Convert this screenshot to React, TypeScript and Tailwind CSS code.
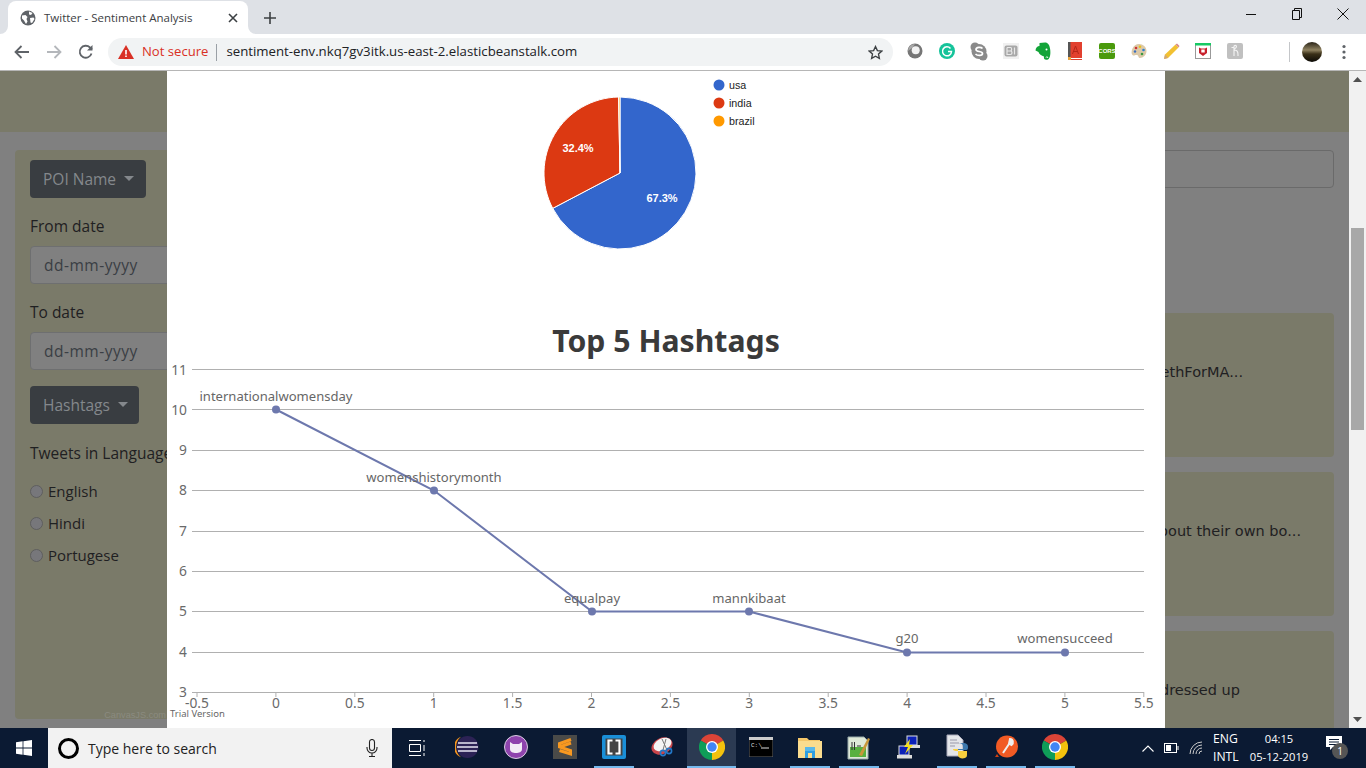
import React from "react";

const sans = "font-['Open_Sans',sans-serif]";

function sector(cx: number, cy: number, r: number, a0: number, a1: number) {
  const p = (a: number) => [cx + r * Math.sin((a * Math.PI) / 180), cy - r * Math.cos((a * Math.PI) / 180)];
  const [x0, y0] = p(a0);
  const [x1, y1] = p(a1);
  return `M${cx} ${cy}L${x0.toFixed(2)} ${y0.toFixed(2)}A${r} ${r} 0 ${a1 - a0 > 180 ? 1 : 0} 1 ${x1.toFixed(2)} ${y1.toFixed(2)}Z`;
}

function ChromeIcon({ size = 26 }: { size?: number }) {
  return (
    <svg width={size} height={size} viewBox="0 0 26 26">
      <path d={sector(13, 13, 13, -60, 60)} fill="#db4437" />
      <path d={sector(13, 13, 13, 60, 180)} fill="#f4c20d" />
      <path d={sector(13, 13, 13, 180, 300)} fill="#0f9d58" />
      <circle cx="13" cy="13" r="6" fill="#fff" />
      <circle cx="13" cy="13" r="4.7" fill="#4285f4" />
    </svg>
  );
}

function TabStrip() {
  return (
    <div className="flex h-[34px] items-end bg-[#dee1e6] pl-[8px]">
      <div className="relative flex h-[33px] w-[240px] items-center rounded-t-lg bg-white pl-[12px] pr-[10px]">
        <svg className="absolute bottom-0 left-[-8px]" width="8" height="8" viewBox="0 0 8 8"><path d="M0 8A8 8 0 0 0 8 0V8Z" fill="#fff" /></svg>
        <svg className="absolute bottom-0 right-[-8px]" width="8" height="8" viewBox="0 0 8 8"><path d="M8 8A8 8 0 0 1 0 0V8Z" fill="#fff" /></svg>
        <svg width="16" height="16" viewBox="0 0 16 16">
          <circle cx="8" cy="8" r="7.5" fill="#5f6368" />
          <path d="M2 5.5L5.5 5 7.5 7 6.5 9 7.5 11.5 6 14 4 10.5 2 8.5ZM9 1.5L12.5 3 11 5 9 4.5ZM10 8L13.5 7.5 14.5 9 12 13 10.5 12.5Z" fill="#fff" />
        </svg>
        <span className={`ml-[8px] text-[11.5px] text-[#3c4043] ${sans}`}>Twitter - Sentiment Analysis</span>
        <svg className="ml-auto" width="10" height="10" viewBox="0 0 10 10" stroke="#3c4043" strokeWidth="1.6"><path d="M1 1L9 9M9 1L1 9" /></svg>
      </div>
      <div className="flex h-[33px] w-[44px] items-center justify-center">
        <svg width="12" height="12" viewBox="0 0 12 12" stroke="#3c4043" strokeWidth="1.6"><path d="M6 0V12M0 6H12" /></svg>
      </div>
      <div className="ml-auto flex h-[34px]">
        {[0, 1, 2].map((i) => (
          <div key={i} className="flex h-[28px] w-[46px] items-center justify-center">
            {i === 0 && <svg width="10" height="10" viewBox="0 0 10 10" stroke="#111" strokeWidth="1"><path d="M0 5.5H10" /></svg>}
            {i === 1 && <svg width="10" height="12" viewBox="0 0 10 12" fill="none" stroke="#111" strokeWidth="1"><path d="M.5 2.5H7.5V11.5H.5ZM2.5 2.5V.5H9.5V9.5H7.5" /></svg>}
            {i === 2 && <svg width="12" height="12" viewBox="0 0 12 12" stroke="#111" strokeWidth="1"><path d="M.5.5L11.5 11.5M11.5.5L.5 11.5" /></svg>}
          </div>
        ))}
      </div>
    </div>
  );
}

const exts: React.ReactNode[] = [
  <svg key="0" width="16" height="16" viewBox="0 0 16 16"><circle cx="8" cy="8" r="7.5" fill="#767676" /><path d="M1 8A7 7 0 0 1 8 1L5 5Z" fill="#a8a8a8" /><circle cx="8.7" cy="7.3" r="4" fill="#f2f2f2" /></svg>,
  <svg key="1" width="16" height="16" viewBox="0 0 16 16"><circle cx="8" cy="8" r="8" fill="#15c39a" /><path d="M11.5 5.5A4.5 4.5 0 1 0 12.5 8.5H9" fill="none" stroke="#fff" strokeWidth="1.5" /></svg>,
  <svg key="2" width="18" height="19" viewBox="0 0 18 19"><circle cx="5" cy="5" r="4.5" fill="#8a8a8a" /><circle cx="13" cy="14" r="4.5" fill="#8a8a8a" /><circle cx="9" cy="9.5" r="7.5" fill="#8a8a8a" /><path d="M12.5 6.5C11 4.8 6 5 6 7.5 6 10.5 12.5 8.5 12.5 11.5 12.5 14 7.5 14 5.5 12" fill="none" stroke="#fff" strokeWidth="1.7" /></svg>,
  <svg key="3" width="16" height="16" viewBox="0 0 16 16"><rect width="16" height="16" fill="#f0f0f0" /><rect x="1.5" y="2.5" width="13" height="11" rx="2" fill="#a8a8a8" /><path d="M4 4.5V11.5H7.5C9.5 11.5 9.5 8 7.5 8H4M7.5 8C9 8 9 4.5 7.5 4.5H4M11.5 4.5V11.5" fill="none" stroke="#e8e8e8" strokeWidth="1.2" /></svg>,
  <svg key="4" width="17" height="19" viewBox="0 0 17 19"><path d="M4.5 1L10 .5C13 .5 14.5 3 15 6.5 16 11.5 15 16.5 13 17.5 10 18.5 8.5 17 9 14.5 6.5 14 4 12 3.5 10L.5 8.5C.5 6 2.5 4 4.5 4Z" fill="#12a438" /><circle cx="11.5" cy="7.5" r="1" fill="#fff" /><path d="M11 15.5C12 14 13 15 12.5 16" fill="none" stroke="#fff" /></svg>,
  <svg key="5" width="14" height="18" viewBox="0 0 14 18"><rect width="14" height="15" fill="#e2402f" /><rect width="2.5" height="15" fill="#555" /><path d="M4.5 12L7.5 4 10.5 12M5.5 9.5H9.5" fill="none" stroke="#b5261a" strokeWidth="1" /><rect y="15" width="14" height="1" fill="#e2402f" /><rect y="17" width="14" height="1" fill="#e2402f" /><rect y="15" width="3" height="3" fill="#e8a33a" /></svg>,
  <div key="6" className="flex h-[16px] w-[16px] items-center justify-center overflow-hidden rounded-[2px] bg-[#4a9a0c] font-['Liberation_Sans',sans-serif] text-[6px] font-bold leading-none text-white">CORS</div>,
  <svg key="7" width="16" height="16" viewBox="0 0 16 16"><path d="M8 1C12 1 15.5 4 15.5 8 15.5 12 12 15 9 15 7 15 8 12.5 6 12 4 11.5 3 13.5 1.5 12 0 10.5 .5 8 1.5 5.5 3 2.5 5 1 8 1Z" fill="#dcc9a8" /><circle cx="5" cy="5" r="1.3" fill="#c33" /><circle cx="9" cy="3.8" r="1.3" fill="#e8c020" /><circle cx="12.5" cy="7" r="1.3" fill="#2d7fd0" /><circle cx="11" cy="11" r="1.3" fill="#3a9a40" /><circle cx="4" cy="8.5" r="1.2" fill="#3a6fc0" /></svg>,
  <svg key="8" width="17" height="17" viewBox="0 0 17 17"><path d="M1 16L2 11.5 12.5 1.5 15.5 4.5 5 15Z" fill="#f2c132" /><path d="M12.5 1.5L14 0.5 16.5 3 15.5 4.5Z" fill="#d88a8a" /><path d="M1 16L2 11.5 5 15Z" fill="#cfa67a" /></svg>,
  <svg key="9" width="16" height="16" viewBox="0 0 16 16"><rect x=".5" y=".5" width="15" height="15" fill="#fff" stroke="#999" /><rect width="16" height="2.5" fill="#17c964" /><path d="M4 4.5L6 5.5H10L12 4.5V10L8 13 4 10Z" fill="#c8202c" /><rect x="6.3" y="6.5" width="3.4" height="3" fill="#fff" /></svg>,
  <svg key="10" width="16" height="16" viewBox="0 0 16 16"><rect width="16" height="16" rx="2" fill="#c0c0c0" /><path d="M7 13V3.5C7 2 9.5 2 9.5 3.5 9.5 5.5 6 6 7 7.5 10 6.5 11 9 11 11.5V13M4.5 4.5H6.5" fill="none" stroke="#f4f4f4" strokeWidth="1.1" /></svg>,
];

function Toolbar() {
  return (
    <div className="flex h-[37px] items-center border-b border-[#b6b6b6] bg-white">
      <div className="flex w-[108px] items-center pl-[14px]">
        <svg className="mr-[16px]" width="16" height="14" viewBox="0 0 16 14" fill="none" stroke="#5f6368" strokeWidth="1.8"><path d="M15 7H2M7.5 1L1.5 7 7.5 13" /></svg>
        <svg className="mr-[16px]" width="16" height="14" viewBox="0 0 16 14" fill="none" stroke="#b4b7bb" strokeWidth="1.8"><path d="M1 7H14M8.5 1L14.5 7 8.5 13" /></svg>
        <svg width="16" height="16" viewBox="0 0 16 16" fill="none" stroke="#5f6368" strokeWidth="1.8"><path d="M13.5 9.5A6 6 0 1 1 12 3.5L14 5.5" /><path d="M14.5 1V6.5H9" fill="#5f6368" stroke="none" /></svg>
      </div>
      <div className={`flex h-[28px] w-[785px] items-center rounded-full bg-[#f1f3f4] pl-[10px] text-[13px] ${sans}`}>
        <svg width="16" height="14" viewBox="0 0 16 14"><path d="M8 0L16 14H0Z" fill="#d93025" /><path d="M7.2 5H8.8V9.5H7.2ZM7.2 10.5H8.8V12H7.2Z" fill="#fff" /></svg>
        <span className="ml-[8px] text-[13.1px] text-[#d93025]">Not secure</span>
        <span className="ml-[8px] h-[17px] w-px bg-[#9aa0a6]" />
        <span className="ml-[9px] text-[13.23px] text-[#202124]">sentiment-env.nkq7gv3itk.us-east-2.elasticbeanstalk.com</span>
        <svg className="ml-auto mr-[10px]" width="15" height="15" viewBox="0 0 24 24" fill="none" stroke="#3c4043" strokeWidth="2.2"><path d="M12 2.5L15 9 22 9.8 16.8 14.5 18.2 21.5 12 18 5.8 21.5 7.2 14.5 2 9.8 9 9Z" /></svg>
      </div>
      <div className="mb-[2px] ml-[6px] flex">
        {exts.map((e, i) => (
          <div key={i} className="flex h-[32px] w-[32px] items-center justify-center">{e}</div>
        ))}
      </div>
      <span className="ml-[38px] h-[20px] w-px bg-[#c4c6c9]" />
      <svg className="ml-[12px]" width="20" height="20" viewBox="0 0 20 20">
        <defs>
          <linearGradient id="av" x1="0" y1="0" x2="0" y2="1"><stop offset="0" stopColor="#2a2418" /><stop offset=".4" stopColor="#8f8260" /><stop offset=".6" stopColor="#3a3018" /><stop offset="1" stopColor="#0c0a06" /></linearGradient>
        </defs>
        <circle cx="10" cy="10" r="10" fill="url(#av)" />
      </svg>
      <svg className="ml-[20px]" width="4" height="16" viewBox="0 0 4 16" fill="#5f6368"><circle cx="2" cy="2.5" r="1.6" /><circle cx="2" cy="8" r="1.6" /><circle cx="2" cy="13.5" r="1.6" /></svg>
    </div>
  );
}

function Radio({ label }: { label: string }) {
  return (
    <div className="flex h-[32px] items-center">
      <span className="mt-[1px] h-[13px] w-[13px] rounded-full border border-[#5e5e5e] bg-[#77777b]" />
      <span className="ml-[5px] text-[15px] text-[#1f2022]">{label}</span>
    </div>
  );
}

function DateInput() {
  return (
    <div className="flex h-[38px] items-center rounded-l border border-[#6e6f70] bg-[#808080] pl-[13px] pt-[2px] tracking-[0.5px] text-[#3a3e44]">dd-mm-yyyy</div>
  );
}

function Dropdown({ label, w }: { label: string; w: string }) {
  return (
    <div className={`flex h-[38px] ${w} items-center rounded bg-[#393d41] pl-[13px] pt-[2px] text-[#84888c]`}>
      {label}
      <span className="mb-[4px] ml-[8px] h-0 w-0 border-x-[5px] border-t-[5px] border-x-transparent border-t-[#84888c]" />
    </div>
  );
}

function Page() {
  const cards = [
    { t: "ethForMA...", pr: "pr-[91px]" },
    { t: "about their own bo...", pr: "pr-[33px]" },
    { t: "dressed up", pr: "pr-[94px]" },
  ];
  return (
    <div className={`flex-1 overflow-hidden bg-[#808080] text-[15.5px] ${sans}`}>
      <div className="h-[61px] bg-[#7a7a69]" />
      <div className="flex gap-[20px] pl-[15px] pr-[15px] pt-[18px]">
        <div className="h-[569px] w-[300px] rounded-l bg-[#7a7a69] px-[15px] pt-[10px] text-[#1f2022]">
          <Dropdown label="POI Name" w="w-[116px]" />
          <div className="mt-[16px] h-[24px] leading-[24px]">From date</div>
          <div className="mt-[8px]"><DateInput /></div>
          <div className="mt-[16px] h-[24px] leading-[24px]">To date</div>
          <div className="mt-[8px]"><DateInput /></div>
          <div className="mt-[16px]"><Dropdown label="Hashtags" w="w-[109px]" /></div>
          <div className="mt-[17px] h-[24px] whitespace-nowrap leading-[24px]">Tweets in Language</div>
          <div className="mt-[10px]">
            <Radio label="English" />
            <Radio label="Hindi" />
            <Radio label="Portugese" />
          </div>
        </div>
        <div className="flex-1">
          <div className="h-[38px] rounded border border-[#6a6a6a]" />
          <div className="mt-[125px] flex flex-col gap-[15px] font-['DejaVu_Sans',sans-serif] text-[14.5px] leading-[22px] text-[#1f2022]">
            {cards.map((c) => (
              <div key={c.t} className={`flex h-[144px] items-start justify-end rounded bg-[#7a7a69] pt-[48px] ${c.pr}`}>{c.t}</div>
            ))}
          </div>
        </div>
      </div>
    </div>
  );
}

function Pie() {
  const legend = [
    ["usa", "#3366cc", 14],
    ["india", "#dc3912", 32],
    ["brazil", "#ff9900", 50],
  ] as const;
  const a = 0.673 * 360;
  const b = a + 0.324 * 360;
  return (
    <svg width="998" height="209" viewBox="167 71 998 209" className="block font-['Liberation_Sans',sans-serif]">
      <g stroke="#fff" strokeWidth="1">
        <path d={sector(620, 173, 76, 0, a)} fill="#3366cc" />
        <path d={sector(620, 173, 76, a, b)} fill="#dc3912" />
        <path d={sector(620, 173, 76, b, 360)} fill="#ff9900" />
      </g>
      <text x="662" y="202" textAnchor="middle" fontSize="11" fontWeight="700" fill="#fff">67.3%</text>
      <text x="578" y="152" textAnchor="middle" fontSize="11" fontWeight="700" fill="#fff">32.4%</text>
      {legend.map(([t, c, y]) => (
        <g key={t}>
          <circle cx="719" cy={71 + y} r="5.5" fill={c} />
          <text x="729" y={71 + y + 4} fontSize="10.7" fill="#222">{t}</text>
        </g>
      ))}
    </svg>
  );
}

function LineChart() {
  const gy = [692, 652, 611, 571, 531, 490, 450, 409.5, 369.5];
  const xs = [276, 434, 592, 749, 907, 1065];
  const pts = [10, 8, 5, 5, 4, 4].map((v, i) => [xs[i], Math.floor(gy[v - 3]) + 0.5] as const);
  const labels = [
    ["internationalwomensday", 276, 401],
    ["womenshistorymonth", 434, 482],
    ["equalpay", 592, 603],
    ["mannkibaat", 749, 603],
    ["g20", 907, 643],
    ["womensucceed", 1065, 643],
  ] as const;
  const ticks = ["-0.5", "0", "0.5", "1", "1.5", "2", "2.5", "3", "3.5", "4", "4.5", "5", "5.5"];
  return (
    <svg width="998" height="448" viewBox="167 280 998 448" className="block font-['Noto_Sans',sans-serif]">
      <text x="666" y="352" textAnchor="middle" fontSize="30.2" fontWeight="700" fill="#3a3a3a">Top 5 Hashtags</text>
      {gy.map((y, i) => (
        <g key={y}>
          <line x1="192" x2="1144" y1={Math.floor(y) + 0.5} y2={Math.floor(y) + 0.5} stroke="#b0b0b0" />
          <text x="187" y={y + 5} textAnchor="end" fontSize="13.8" fill="#6a6a6a">{i + 3}</text>
        </g>
      ))}
      {ticks.map((t, i) => {
        const x = 197 + i * 78.9;
        return (
          <g key={t}>
            <line x1={x} x2={x} y1="692" y2="697" stroke="#b0b0b0" />
            <text x={x} y="708" textAnchor="middle" fontSize="13.8" fill="#6a6a6a">{t}</text>
          </g>
        );
      })}
      <polyline points={pts.map((p) => p.join(",")).join(" ")} fill="none" stroke="#6d78ad" strokeWidth="2" />
      {pts.map(([x, y]) => <circle key={x} cx={x} cy={y} r="4" fill="#6d78ad" />)}
      {labels.map(([t, x, y]) => (
        <text key={t} x={x} y={y} textAnchor="middle" fontSize="13.05" fill="#666">{t}</text>
      ))}
      <text x="170" y="717" fontSize="9.5" fill="#666">Trial Version</text>
    </svg>
  );
}

function Taskbar() {
  const icons: { el: React.ReactNode; line?: boolean; active?: boolean }[] = [
    { el: <svg width="24" height="24" viewBox="0 0 24 24"><circle cx="12.5" cy="12" r="11" fill="#2c2255" /><path d="M6 1.8A11 11 0 0 0 6 22.2 13 13 0 0 1 6 1.8Z" fill="#f7941e" /><path d="M3 8H22M2 12H23M3 16H22" stroke="#e8e6f4" strokeWidth="1.6" /></svg> },
    { el: <svg width="24" height="24" viewBox="0 0 24 24"><circle cx="12" cy="12" r="11.5" fill="#8e44ad" stroke="#d8cfe0" strokeWidth="1" /><path d="M6 7L9 9H15L18 7V14C18 17 15 18 12 18 9 18 6 17 6 14Z" fill="#f2edf6" /></svg> },
    { el: <svg width="24" height="24" viewBox="0 0 24 24"><rect width="24" height="24" fill="#4a4a48" /><path d="M18 4.5L6.5 8.5V12L17.5 15.5V19L6.5 15.5M6.5 12L18 8" fill="none" stroke="#f89820" strokeWidth="3" /></svg> },
    { line: true, el: <svg width="24" height="24" viewBox="0 0 24 24"><rect width="24" height="24" rx="2" fill="#1a8fd8" /><rect x="3.5" y="3.5" width="17" height="17" fill="#444" /><path d="M10.5 5.5H6.5V18.5H10.5M13.5 5.5H17.5V18.5H13.5" fill="none" stroke="#fff" strokeWidth="2.2" /></svg> },
    { el: <svg width="24" height="24" viewBox="0 0 24 24"><ellipse cx="11" cy="11" rx="11" ry="8" transform="rotate(-25 11 11)" fill="#c9454a" /><ellipse cx="11.5" cy="9.5" rx="9.5" ry="6" transform="rotate(-25 11.5 9.5)" fill="#f4f4f4" /><path d="M11 4L16 15M15 4L12 15" stroke="#777" strokeWidth="1" /><circle cx="12" cy="18" r="2.6" fill="none" stroke="#2378c8" strokeWidth="1.6" /><circle cx="18" cy="16" r="2.6" fill="none" stroke="#2378c8" strokeWidth="1.6" /></svg> },
    { active: true, el: <ChromeIcon /> },
    { el: <svg width="24" height="20" viewBox="0 0 24 20"><rect width="24" height="20" rx="1" fill="#000" stroke="#666" /><rect width="24" height="3" fill="#ccc" /><text x="2" y="10" fontSize="6" fill="#ddd" fontFamily="Liberation Mono">C:\</text><path d="M12 11H20" stroke="#ddd" /></svg> },
    { line: true, el: <svg width="24" height="21" viewBox="0 0 24 21"><path d="M0 1H9L11 3H22V8H0Z" fill="#f5c76a" /><rect y="4" width="24" height="17" fill="#fbdc8e" /><path d="M7 12H17V21H14V16H10V21H7Z" fill="#2f9ee0" /><rect x="7" y="10" width="10" height="4" fill="#5ab8ea" /></svg> },
    { line: true, el: <svg width="24" height="26" viewBox="0 0 24 26"><path d="M1 3H17L21 7V25H1Z" fill="#dfe9d8" stroke="#9aa" /><rect x="3" y="13" width="16" height="10" fill="#58b03f" /><path d="M5 8V16M7.5 8V16M10 12H14" stroke="#333" strokeWidth="1" /><path d="M12 21L21 4 23 5 15 22Z" fill="#c9973a" /></svg> },
    { el: <svg width="24" height="24" viewBox="0 0 24 24"><rect x="11" y="1" width="10" height="9" fill="#0b20b8" stroke="#ddd" /><rect x="9" y="10" width="15" height="3" fill="#ddd" /><rect x="3" y="11" width="10" height="9" fill="#0b20b8" stroke="#ddd" /><rect x="1" y="20" width="15" height="3.5" fill="#ddd" /><path d="M14 4L8 12H12L9 19 17 10H13Z" fill="#f5e020" /></svg> },
    { line: true, el: <svg width="24" height="26" viewBox="0 0 24 26"><path d="M2 1H13L18 6V22H2Z" fill="#e4e6ea" stroke="#aab" /><path d="M5 6H12M5 9H14M5 12H10" stroke="#99a" /><path d="M12 9C17 9 18 10 18 13V15H13V16H21C23 16 23 14 23 13 23 10 21 9 18 9ZM16 11V12.5" fill="#3d78ad" /><path d="M8 15H13V21C13 24 17 25 20 24 22 23 22 22 22 20V17H13.5C11 17 8 17 8 15Z" fill="#f9cf3e" /></svg> },
    { line: true, el: <svg width="24" height="24" viewBox="0 0 24 24"><circle cx="13" cy="11.5" r="11" fill="#f15a24" /><path d="M9 18L15 9M16 4C19 4 20 8 17.5 10L15 8.5Z" stroke="#eee" strokeWidth="2" fill="#eee" /><path d="M1 22L3 19 5 22Z" fill="#d04010" /></svg> },
    { line: true, el: <ChromeIcon /> },
  ];
  return (
    <div className={`flex h-[40px] items-center bg-[#0b1a33] text-white ${sans}`}>
      <div className="flex h-[40px] w-[48px] items-center justify-center">
        <svg width="16" height="16" viewBox="0 0 16 16" fill="#fff"><path d="M0 2.3L6.6 1.3V7.6H0ZM7.4 1.2L16 0V7.6H7.4ZM0 8.4H6.6V14.7L0 13.7ZM7.4 8.4H16V16L7.4 14.8Z" /></svg>
      </div>
      <div className="flex h-[40px] w-[344px] items-center bg-[#f2f2f2] pl-[10px] text-[14px] text-[#222]">
        <span className="h-[21px] w-[21px] rounded-full border-[3px] border-black" />
        <span className="ml-[9px]">Type here to search</span>
        <svg className="ml-auto mr-[14px]" width="12" height="18" viewBox="0 0 12 18" fill="none" stroke="#222" strokeWidth="1.1"><rect x="3.5" y=".5" width="5" height="11" rx="2.5" /><path d="M1 8V9A5 5 0 0 0 11 9V8M6 14V17M3 17.5H9" /></svg>
      </div>
      <div className="flex h-[40px] w-[50px] items-center justify-center">
        <svg width="16" height="18" viewBox="0 0 16 18" fill="none" stroke="#fff" strokeWidth="1"><path d="M0 1.5H12M0 16.5H12M.5 5.5H11.5V12.5H.5ZM15 1V3M15 6V12M15 14V17" /></svg>
      </div>
      {icons.map((ic, i) => (
        <div key={i} className={`flex h-[40px] w-[49px] justify-center ${ic.active ? "bg-[#2b3a52]" : ""}`}>
          <div className={`flex h-[40px] items-center justify-center border-b-2 ${ic.active ? "w-[49px] border-[#76b9ed]" : ic.line ? "w-[40px] border-[#76b9ed]" : "w-[40px] border-transparent"}`}>
            {ic.el}
          </div>
        </div>
      ))}
      <div className="ml-[63px] flex items-center">
        <svg width="12" height="7" viewBox="0 0 12 7" fill="none" stroke="#fff" strokeWidth="1.1"><path d="M.5 6.5L6 1 11.5 6.5" /></svg>
        <svg className="ml-[10px]" width="15" height="10" viewBox="0 0 15 10" fill="none" stroke="#fff"><rect x=".5" y=".5" width="12" height="9" /><rect x="2" y="2" width="5" height="6" fill="#fff" stroke="none" /><path d="M14 3V7" /></svg>
        <svg className="ml-[10px]" width="15" height="14" viewBox="0 0 15 14" fill="none" stroke="#ccc"><path d="M1 13A12 12 0 0 1 13 1M4 13A9 9 0 0 1 13 4M7 13A6 6 0 0 1 13 7M10 13A3 3 0 0 1 13 10" /></svg>
      </div>
      <div className="ml-[9px] flex w-[30px] flex-col text-[12.2px] leading-[18px]">
        <span>ENG</span>
        <span>INTL</span>
      </div>
      <div className="ml-[5px] flex w-[62px] flex-col items-center text-[11.2px] leading-[18px]">
        <span>04:15</span>
        <span>05-12-2019</span>
      </div>
      <div className="relative ml-[16px] h-[24px] w-[18px]">
        <svg width="16" height="15" viewBox="0 0 16 15" fill="#fff"><path d="M0 0H16V11H7L4 14V11H0Z" /><path d="M3 3.5H13M3 6H13M3 8.5H10" stroke="#0b1a33" /></svg>
        <span className="absolute left-[6px] top-[7px] flex h-[16px] w-[16px] items-center justify-center rounded-full bg-[#555] text-[10px] leading-none">1</span>
      </div>
    </div>
  );
}

export default function App() {
  return (
    <div className="flex h-[768px] w-[1366px] flex-col overflow-hidden">
      <TabStrip />
      <Toolbar />
      <div className="relative flex h-[657px]">
        <Page />
        <div className="relative flex w-[17px] flex-col items-center bg-[#f1f1f1]">
          <svg className="mt-[6px]" width="9" height="5" viewBox="0 0 9 5" fill="#505050"><path d="M4.5 0L9 5H0Z" /></svg>
          <div className="mt-[146px] h-[202px] w-[13px] bg-[#a8a8a8]" />
          <svg className="mb-[6px] mt-auto" width="9" height="5" viewBox="0 0 9 5" fill="#505050"><path d="M4.5 5L9 0H0Z" /></svg>
        </div>
        <div className="absolute bottom-0 left-[167px] top-0 w-[998px] bg-white">
          <Pie />
          <LineChart />
          <span className="absolute right-[999px] top-[638px] whitespace-nowrap font-['Liberation_Sans',sans-serif] text-[9.2px] text-[#8b8b80]">CanvasJS.com</span>
        </div>
      </div>
      <Taskbar />
    </div>
  );
}
